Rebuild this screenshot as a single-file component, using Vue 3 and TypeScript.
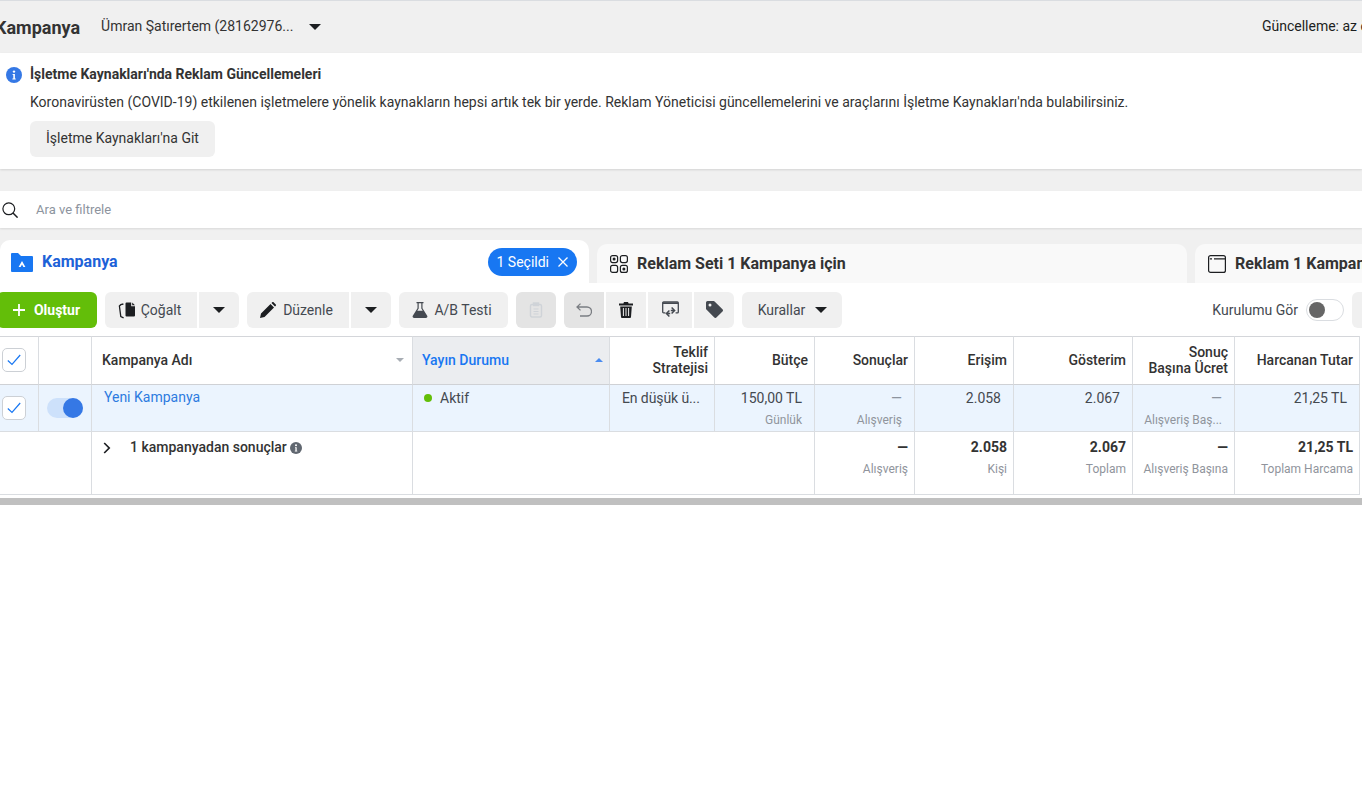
<template>
  <div class="page">
    <header class="topbar">
      <h1 class="title">Kampanya</h1>
      <div class="account">Ümran Şatırertem (28162976...</div>
      <span class="caret caret-lg"></span>
      <div class="updated">Güncelleme: az önce</div>
    </header>

    <div class="upper">
      <section class="banner">
        <div class="banner-head">
          <svg class="info" viewBox="0 0 16 16" width="16" height="16">
            <circle cx="8" cy="8" r="8" fill="#3578e5" />
            <circle cx="8" cy="4.600" r="1.200" fill="#fff" />
            <path d="M6.600 7h2.300v4.400h.8v1H6.400v-1h.9V8h-.7z" fill="#fff" />
          </svg>
          <strong>İşletme Kaynakları'nda Reklam Güncellemeleri</strong>
        </div>
        <p class="banner-text">Koronavirüsten (COVID-19) etkilenen işletmelere yönelik kaynakların hepsi artık tek bir yerde. Reklam Yöneticisi güncellemelerini ve araçlarını İşletme Kaynakları'nda bulabilirsiniz.</p>
        <button class="banner-btn">İşletme Kaynakları'na Git</button>
      </section>

      <div class="search">
        <svg viewBox="0 0 16 16" width="16" height="16" fill="none" stroke="#1c1e21" stroke-width="1.200">
          <circle cx="6.800" cy="6.800" r="5.900" />
          <path d="M11 11l4.600 4.600" stroke-width="1.500" />
        </svg>
        <span>Ara ve filtrele</span>
      </div>

      <nav class="tabs">
        <div class="tab tab-active">
          <svg viewBox="0 0 22 20" width="22" height="20">
            <path d="M0 2a1 1 0 0 1 1-1h6l3 3h11a1 1 0 0 1 1 1v14a1 1 0 0 1-1 1H1a1 1 0 0 1-1-1z" fill="#1877f2" />
            <path d="M11 9l3.400 6h-2l-1.400-2.500L9.600 15h-2z" fill="#fff" />
          </svg>
          <span class="tab-name">Kampanya</span>
          <span class="chip">1 Seçildi
            <svg viewBox="0 0 10 10" width="10" height="10" stroke="#fff" stroke-width="1.300"><path d="M.5.5l9 9M9.500.5l-9 9" /></svg>
          </span>
        </div>
        <div class="tab tab-mid">
          <svg viewBox="0 0 20 20" width="20" height="20" fill="none" stroke="#1c1e21" stroke-width="1.200">
            <rect x="1.600" y="1.600" width="7" height="7" rx="2" /><rect x="11.400" y="1.600" width="7" height="7" rx="2" />
            <rect x="1.600" y="11.400" width="7" height="7" rx="2" /><rect x="11.400" y="11.400" width="7" height="7" rx="2" />
            <circle cx="5.100" cy="5.100" r=".9" fill="#1c1e21" /><circle cx="14.900" cy="14.900" r=".9" fill="#1c1e21" />
          </svg>
          <span>Reklam Seti 1 Kampanya için</span>
        </div>
        <div class="tab tab-last">
          <svg viewBox="0 0 20 20" width="20" height="20" fill="none" stroke="#1c1e21" stroke-width="1.200">
            <rect x="1.600" y="1.600" width="16.800" height="16.800" rx="2" />
            <path d="M7 4.800h11M2.800 4.800h2.200" />
          </svg>
          <span>Reklam 1 Kampanya için</span>
        </div>
      </nav>
    </div>

    <div class="toolbar">
      <button class="btn btn-create">
        <svg viewBox="0 0 12 12" width="12" height="12" stroke="#fff" stroke-width="1.800"><path d="M6 0v12M0 6h12" /></svg>
        Oluştur
      </button>
      <div class="group">
        <button class="btn btn-copy">
          <svg viewBox="0 0 18 18" width="18" height="18">
            <path d="M8.500 1.500h4.700v3.800H17v9.200a1 1 0 0 1-1 1H8.500a1 1 0 0 1-1-1V2.500a1 1 0 0 1 1-1zM14.200 1.500L17 4.300h-2.800z" fill="#1c1e21" />
            <path d="M5.400 3L2.800 3.700 1.400 5l1.400 10.500 2.800 1.300" fill="none" stroke="#1c1e21" stroke-width="1.300" />
          </svg>
          Çoğalt
        </button>
        <button class="btn btn-caret"><span class="caret"></span></button>
      </div>
      <div class="group">
        <button class="btn btn-edit">
          <svg viewBox="0 0 16 16" width="16" height="16">
            <path d="M0 16l1-4.500L10.500 2l3.500 3.500L4.500 15zM11.500 1l1-1h.8l2.700 2.700v.8l-1 1z" fill="#1c1e21" />
          </svg>
          Düzenle
        </button>
        <button class="btn btn-caret"><span class="caret"></span></button>
      </div>
      <button class="btn btn-ab">
        <svg viewBox="0 0 16 16" width="16" height="16">
          <path d="M4.500 0h7v1.200h-1v5l4.700 7.600a1.500 1.500 0 0 1-1.300 2.200H2.100a1.500 1.500 0 0 1-1.300-2.200l4.700-7.600v-5h-1z" fill="#444950" />
          <path d="M6.700 1.200h2.600v5.300l1.400 2.300H5.300l1.400-2.300z" fill="#f0f0f0" />
        </svg>
        A/B Testi
      </button>
      <button class="btn btn-icon btn-off btn-clip">
        <svg viewBox="0 0 14 16" width="14" height="16" fill="none" stroke="#cfd3d8" stroke-width="1.400">
          <rect x="1.500" y="2.500" width="11" height="12.500" rx="1.500" />
          <rect x="4.500" y="1" width="5" height="2.500" fill="#cfd3d8" />
          <path d="M4.500 7h5M4.500 9.500h5M4.500 12h5" stroke-width="1" />
        </svg>
      </button>
      <div class="group group-icons">
        <button class="btn btn-icon btn-off">
          <svg viewBox="0 0 16 14" width="16" height="14" fill="none" stroke="#7a7d82" stroke-width="1.300">
            <path d="M4.500.6L1 4l3.500 3.400M1 4h10a3.900 3.900 0 0 1 0 9H4" />
          </svg>
        </button>
        <button class="btn btn-icon">
          <svg viewBox="0 0 14 16" width="14" height="16">
            <path d="M5 0h4l.6 1.600H14v1.800H0V1.600h4.400zM1.200 4.400h11.600L12 15a1 1 0 0 1-1 1H3a1 1 0 0 1-1-1z" fill="#1c1e21" />
            <path d="M4.400 6v8M7 6v8M9.600 6v8" stroke="#f0f0f0" stroke-width="1" />
          </svg>
        </button>
        <button class="btn btn-icon btn-wide">
          <svg viewBox="0 0 17 17" width="17" height="17" fill="none" stroke="#444950" stroke-width="1.300">
            <path d="M3.400 11.800H1.600a.9.900 0 0 1-.9-.9V2a1 1 0 0 1 1-1h13.600a1 1 0 0 1 1 1v8.900a.9.900 0 0 1-.9.900h-1.800" />
            <path d="M.7 2.200h15.600" stroke-width="1.600" />
            <path d="M7.400 9.500l-3 3 3 3M4.800 12.500h3.400M9.600 6.500l3 3-3 3M12.200 9.500H8.800" stroke-width="1.500" />
          </svg>
        </button>
        <button class="btn btn-icon">
          <svg viewBox="0 0 17 17" width="17" height="17">
            <path d="M1.500 0h6a1.500 1.500 0 0 1 1.100.4l7.900 7.900a1.500 1.500 0 0 1 0 2.100l-6.100 6.100a1.500 1.500 0 0 1-2.100 0L.4 8.600A1.500 1.500 0 0 1 0 7.500v-6A1.500 1.500 0 0 1 1.500 0z" fill="#444950" />
            <circle cx="4" cy="4" r="1.500" fill="#f0f0f0" />
          </svg>
        </button>
      </div>
      <button class="btn btn-rules">Kurallar <span class="caret"></span></button>
      <div class="view-setup">
        <span>Kurulumu Gör</span>
        <span class="switch"><i></i></span>
        <button class="btn btn-edge"></button>
      </div>
    </div>

    <div class="table">
      <div class="cell head check-cell"><span class="checkbox"><svg viewBox="0 0 14 12" width="14" height="12" fill="none" stroke="#1877f2" stroke-width="1.200"><path d="M.8 6.500L5 10.500 13.200 1" /></svg></span></div>
      <div class="cell head"></div>
      <div class="cell head left name-head">Kampanya Adı <span class="sort sort-down"></span></div>
      <div class="cell head left status-head">Yayın Durumu <span class="sort sort-up"></span></div>
      <div v-for="col in columns" :key="col" class="cell head right">{{ col }}</div>

      <div class="cell row check-cell"><span class="checkbox"><svg viewBox="0 0 14 12" width="14" height="12" fill="none" stroke="#1877f2" stroke-width="1.200"><path d="M.8 6.500L5 10.500 13.200 1" /></svg></span></div>
      <div class="cell row toggle-cell"><span class="toggle"><i></i></span></div>
      <div class="cell row name-cell"><a>Yeni Kampanya</a></div>
      <div class="cell row status-cell"><i class="dot"></i>Aktif</div>
      <div class="cell row strategy">En düşük ü...</div>
      <div v-for="c in rowCells" :key="c.key" class="cell row metric" :class="c.cls">
        <span class="val">{{ c.value }}</span>
        <small>{{ c.sub }}</small>
      </div>

      <div class="cell sum span-two"></div>
      <div class="cell sum sum-name">
        <svg viewBox="0 0 8 12" width="8" height="12" fill="none" stroke="#1c1e21" stroke-width="1.700"><path d="M1.200 1l5 5-5 5" /></svg>
        <b>1 kampanyadan sonuçlar</b>
        <svg viewBox="0 0 12 12" width="12" height="12">
          <circle cx="6" cy="6" r="6" fill="#606770" />
          <circle cx="6" cy="3.200" r="1" fill="#fff" />
          <path d="M5 5.200h1.700v3.600h.6v.8H4.800v-.8h.6V6H5z" fill="#fff" />
        </svg>
      </div>
      <div class="cell sum span-three"></div>
      <div v-for="c in sumCells" :key="c.value + c.sub" class="cell sum metric">
        <b>{{ c.value }}</b>
        <small>{{ c.sub }}</small>
      </div>
    </div>
    <div class="scrollbar"></div>
  </div>
</template>

<script setup lang="ts">
const columns: string[] = [
  "Teklif\nStratejisi",
  "Bütçe",
  "Sonuçlar",
  "Erişim",
  "Gösterim",
  "Sonuç\nBaşına Ücret",
  "Harcanan Tutar",
];

const rowCells = [
  { key: "budget", value: "150,00 TL", sub: "Günlük", cls: "inset" },
  { key: "results", value: "—", sub: "Alışveriş", cls: "muted" },
  { key: "reach", value: "2.058", sub: "", cls: "inset" },
  { key: "impr", value: "2.067", sub: "", cls: "inset" },
  { key: "cpr", value: "—", sub: "Alışveriş Baş...", cls: "muted" },
  { key: "spent", value: "21,25 TL", sub: "", cls: "inset" },
];

const sumCells = [
  { value: "—", sub: "Alışveriş" },
  { value: "2.058", sub: "Kişi" },
  { value: "2.067", sub: "Toplam" },
  { value: "—", sub: "Alışveriş Başına" },
  { value: "21,25 TL", sub: "Toplam Harcama" },
];
</script>

<style>
html, body { background: #fff; overflow: hidden; }
</style>

<style scoped>
.page {
  width: 1362px;
  height: 800px;
  overflow: hidden;
  font-family: Roboto, "Liberation Sans", sans-serif;
  font-size: 14px;
  color: #1c1e21;
  background: #fff;
}
button {
  font: inherit;
  color: inherit;
  border: none;
  cursor: pointer;
}

.topbar {
  height: 53px;
  box-sizing: border-box;
  border-top: 1px solid #dadde1;
  background: #f0f0f0;
  display: flex;
  align-items: center;
  white-space: nowrap;
}
.title {
  margin: 0 0 0 -5px;
  font-size: 18px;
  font-weight: 700;
  color: #333;
}
.account { margin: 0 0 2px 21px; color: #333; }
.caret {
  display: inline-block;
  width: 0;
  height: 0;
  border-left: 6px solid transparent;
  border-right: 6px solid transparent;
  border-top: 6px solid #1c1e21;
}
.caret-lg { margin-left: 16px; }
.updated { margin: 0 -29px 2px auto; }

.upper { background: #f0f0f0; }
.banner {
  height: 116px;
  box-sizing: border-box;
  padding: 12px 30px 0;
  background: #fff;
  box-shadow: 0 1px 2px rgba(0, 0, 0, .12);
}
.banner-head {
  display: flex;
  align-items: center;
  height: 17px;
  font-size: 14px;
  margin-left: -24px;
  gap: 8px;
  color: #333;
}
.banner-head .info { margin-top: 2px; }
.banner-text { margin: 12px 0 0; font-size: 14px; line-height: 16px; color: #333; white-space: nowrap; }
.banner-btn {
  margin-top: 11px;
  height: 36px;
  width: 185px;
  border-radius: 6px;
  background: #f0f0f0;
  color: #333;
  padding: 0 0 2px;
}

.search {
  margin-top: 22px;
  height: 37px;
  padding-left: 2px;
  display: flex;
  align-items: center;
  gap: 18px;
  font-size: 13px;
  color: #8d949e;
  background: #fff;
  box-shadow: 0 1px 2px rgba(0, 0, 0, .1);
}

.tabs {
  display: flex;
  align-items: flex-end;
  gap: 8px;
  height: 55px;
  white-space: nowrap;
}
.tab {
  display: flex;
  align-items: center;
  height: 39px;
  box-sizing: border-box;
  font-size: 16px;
  font-weight: 700;
  background: #f9f9f9;
  color: #333;
  border-radius: 10px 10px 0 0;
  gap: 8px;
  flex: none;
}
.tab-active {
  width: 589px;
  height: 43px;
  background: #fff;
  padding: 0 12px 0 11px;
  color: #1d62d8;
  gap: 9px;
}
.tab-active .tab-name { margin-right: auto; }
.tab-mid { width: 590px; padding-left: 12px; }
.tab-last { width: 300px; padding-left: 12px; }
.chip {
  display: flex;
  align-items: center;
  gap: 9px;
  height: 28px;
  padding: 0 9px 0 8px;
  border-radius: 14px;
  background: #1877f2;
  color: #fff;
  font-size: 14px;
  font-weight: 400;
  margin: 1px 0 0;
}

.toolbar {
  height: 53px;
  box-sizing: border-box;
  padding-top: 9px;
  display: flex;
  align-items: flex-start;
  gap: 8px;
  color: #444950;
  white-space: nowrap;
}
.btn {
  height: 36px;
  display: flex;
  align-items: center;
  justify-content: center;
  background: #f0f0f0;
  border-radius: 6px;
  padding: 0 0 1px;
  color: #444950;
  flex: none;
}
.btn-create {
  width: 100px;
  margin-left: -3px;
  background: #63be09;
  color: #fff;
  font-weight: 700;
  gap: 9px;
  padding-right: 1px;
}
.group { display: flex; gap: 2px; }
.group .btn { border-radius: 0; }
.group .btn:first-child { border-radius: 6px 0 0 6px; }
.group .btn:last-child { border-radius: 0 6px 6px 0; }
.btn-copy { width: 92px; gap: 5px; padding-right: 3px; }
.btn-edit { width: 102px; gap: 7px; padding-right: 3px; }
.btn-caret { width: 40px; }
.btn-ab { width: 109px; gap: 6px; padding-right: 3px; }
.btn-icon { width: 40px; }
.btn-wide { width: 44px; }
.btn-off { background: #e4e4e4; }
.btn-rules { width: 100px; gap: 10px; padding-left: 1px; }
.view-setup {
  margin-left: auto;
  display: flex;
  align-items: center;
  height: 36px;
  gap: 8px;
  margin-right: -30px;
}
.switch {
  width: 38px;
  height: 22px;
  box-sizing: border-box;
  border: 1px solid #dadde1;
  border-radius: 11px;
  display: flex;
  align-items: center;
  padding-left: 2px;
}
.switch i {
  width: 16px;
  height: 16px;
  border-radius: 50%;
  background: #666;
}
.btn-edge { width: 40px; }

.table {
  display: grid;
  grid-template-columns: 39px 53px 321px 197px 105px 100px 100px 99px 119px 102px 125px;
  grid-template-rows: 49px 47px 63px;
  width: 1360px;
  font-size: 14px;
  color: #444950;
}
.cell {
  box-sizing: border-box;
  border-right: 1px solid #dadde1;
  border-bottom: 1px solid #dadde1;
  min-width: 0;
}
.head {
  border-top: 1px solid #d4d6da;
  border-bottom-color: #cfd1d5;
  font-weight: 500;
  color: #333;
  line-height: 16px;
  display: flex;
  align-items: center;
  padding: 0 6px 2px;
  white-space: pre-line;
}
.head.right { justify-content: flex-end; text-align: right; }
.head.left { padding-left: 10px; }
.sort {
  margin-left: auto;
  width: 0;
  height: 0;
  border-left: 4px solid transparent;
  border-right: 4px solid transparent;
}
.sort-down { border-top: 4px solid #a8adb4; margin-right: 2px; }
.sort-up { border-bottom: 4px solid #4a8cf0; }
.head.status-head { background: #ebedf0; color: #1877f2; padding-left: 9px; }

.row { background: #ebf4fe; padding: 0 6px; }
.cell.check-cell { display: flex; align-items: center; padding: 0 0 0 2px; }
.head.check-cell { padding-bottom: 1px; }
.checkbox {
  width: 24px;
  height: 24px;
  box-sizing: border-box;
  border: 1px solid #ccd0d5;
  border-radius: 5px;
  background: #fff;
  display: flex;
  align-items: center;
  justify-content: center;
}
.toggle-cell { display: flex; align-items: center; justify-content: center; padding: 0; }
.toggle {
  width: 36px;
  height: 20px;
  border-radius: 10px;
  background: #cde1fb;
  display: flex;
  align-items: center;
  justify-content: flex-end;
}
.toggle i {
  width: 20px;
  height: 20px;
  border-radius: 50%;
  background: #3578e5;
}
.name-cell { padding: 4px 0 0 12px; line-height: 16px; }
.name-cell a { color: #2d7be0; }
.status-cell { display: flex; align-items: flex-start; padding: 5px 0 0 11px; line-height: 16px; }
.dot { width: 8px; height: 8px; border-radius: 50%; background: #63be09; margin: 4px 8px 0 0; }
.strategy { padding: 5px 0 0 12px; line-height: 16px; letter-spacing: -.1px; }
.metric {
  display: flex;
  flex-direction: column;
  align-items: flex-end;
  padding-top: 5px;
  line-height: 16px;
}
.metric small { font-size: 12px; color: #90949c; line-height: 14px; margin-top: 7px; white-space: nowrap; }
.muted, .inset { padding-right: 12px; }
.muted .val { color: #8d949e; }

.span-two { grid-column: span 2; }
.span-three { grid-column: span 3; }
.sum-name {
  display: flex;
  align-items: flex-start;
  padding: 7px 0 0 11px;
  gap: 7px;
  line-height: 16px;
  color: #333;
}
.sum-name > svg:first-child { margin-top: 3px; margin-right: 12px; }
.sum-name > svg:last-child { margin-top: 3px; margin-left: -4px; }
.sum-name b { font-weight: 500; }
.sum.metric { padding: 7px 6px 0 0; }
.sum.metric b { font-weight: 700; color: #333; }

.scrollbar {
  margin-top: 3px;
  height: 7px;
  background: #c0c0c0;
}
</style>
